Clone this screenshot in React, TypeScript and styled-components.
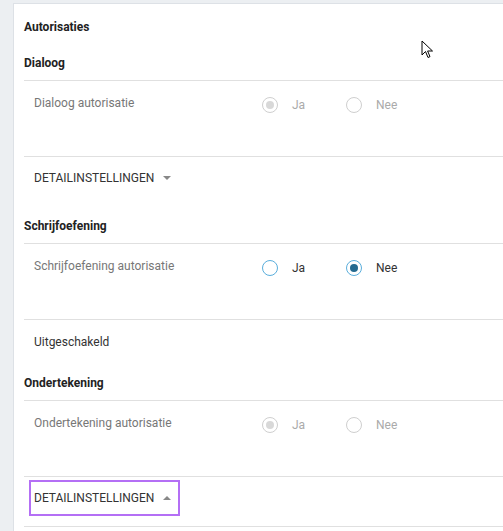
import { createGlobalStyle, styled } from "styled-components";

const GlobalStyle = createGlobalStyle`
  html, body {
    margin: 0;
    padding: 0;
    background: #eceff2;
    overflow: hidden;
  }
  body {
    font-family: Roboto, "Liberation Sans", Arial, sans-serif;
    font-size: 12px;
    color: #222;
  }
`;

const StyledPage = styled.div`
  position: relative;
  padding: 3px 0 0 13px;
  height: 531px;
  box-sizing: border-box;
  overflow: hidden;
`;

const StyledPanel = styled.div`
  width: 520px;
  min-height: 560px;
  background: #fff;
  border: 1px solid #dde1e6;
  padding-left: 10px;
`;

const StyledTitle = styled.div`
  padding: 15px 0 9px;
  line-height: 16px;
  font-weight: 700;
  font-size: 12px;
`;

const StyledHeading = styled.div`
  height: 35px;
  padding-top: 1px;
  line-height: 36px;
  font-weight: 700;
  border-bottom: 1px solid #e0e0e0;
`;

const StyledRow = styled.div`
  display: flex;
  height: 75px;
  border-bottom: 1px solid #e0e0e0;
  padding-left: 10px;
`;

const StyledLabel = styled.div`
  width: 228px;
  padding-top: 14px;
  line-height: 16px;
  color: #777;
`;

const StyledRadios = styled.div`
  display: flex;
  padding-top: 16px;
  height: 16px;
`;

const StyledOption = styled.label<{ $disabled?: boolean }>`
  display: flex;
  align-items: center;
  width: 84px;
  gap: 14px;
  color: ${({ $disabled }) => ($disabled ? "#aaa" : "#333")};
  line-height: 16px;
`;

const StyledCircle = styled.span<{ $disabled?: boolean; $checked?: boolean }>`
  width: 16px;
  height: 16px;
  box-sizing: border-box;
  border-radius: 50%;
  border: 1px solid ${({ $disabled }) => ($disabled ? "#cfcfcf" : "#5aaedc")};
  display: flex;
  align-items: center;
  justify-content: center;

  &::after {
    content: "";
    display: ${({ $checked }) => ($checked ? "block" : "none")};
    width: 8px;
    height: 8px;
    border-radius: 50%;
    background: ${({ $disabled }) => ($disabled ? "#d8d8d8" : "#246a90")};
  }
`;

const StyledDetails = styled.div<{ $divider?: boolean }>`
  height: 50px;
  padding: 3px 0 0 5px;
  box-sizing: border-box;
  border-bottom: 1px solid ${({ $divider }) => ($divider ? "#e0e0e0" : "transparent")};
`;

const StyledDetailsButton = styled.button<{ $focused?: boolean }>`
  display: inline-flex;
  align-items: center;
  gap: 9px;
  height: 36px;
  padding: 0 7px 0 3px;
  background: transparent;
  border: 2px solid ${({ $focused }) => ($focused ? "#b46ff5" : "transparent")};
  font-family: inherit;
  font-size: 12px;
  color: #333;
  text-transform: uppercase;
  cursor: pointer;
`;

const StyledCaret = styled.span<{ $up?: boolean }>`
  width: 0;
  height: 0;
  border-left: 4px solid transparent;
  border-right: 4px solid transparent;
  ${({ $up }) =>
    $up ? "border-bottom: 4px solid #888;" : "border-top: 4px solid #888;"}
`;

const StyledPlain = styled.div`
  height: 44px;
  padding: 14px 0 0 10px;
  box-sizing: border-box;
  line-height: 16px;
  color: #333;
`;

const StyledCursor = styled.svg`
  position: absolute;
  left: 421px;
  top: 40px;
`;

type RowProps = {
  label: string;
  value: "ja" | "nee";
  disabled?: boolean;
};

const AuthRow = ({ label, value, disabled }: RowProps): JSX.Element => (
  <StyledRow>
    <StyledLabel>{label}</StyledLabel>
    <StyledRadios>
      <StyledOption $disabled={disabled}>
        <StyledCircle $disabled={disabled} $checked={value === "ja"} />
        Ja
      </StyledOption>
      <StyledOption $disabled={disabled}>
        <StyledCircle $disabled={disabled} $checked={value === "nee"} />
        Nee
      </StyledOption>
    </StyledRadios>
  </StyledRow>
);

const Details = ({ open }: { open?: boolean }): JSX.Element => (
  <StyledDetails $divider={open}>
    <StyledDetailsButton $focused={open}>
      Detailinstellingen
      <StyledCaret $up={open} />
    </StyledDetailsButton>
  </StyledDetails>
);

const App = (): JSX.Element => (
  <StyledPage>
    <GlobalStyle />
    <StyledPanel>
      <StyledTitle>Autorisaties</StyledTitle>
      <StyledHeading>Dialoog</StyledHeading>
      <AuthRow label='Dialoog autorisatie' value='ja' disabled />
      <Details />
      <StyledHeading>Schrijfoefening</StyledHeading>
      <AuthRow label='Schrijfoefening autorisatie' value='nee' />
      <StyledPlain>Uitgeschakeld</StyledPlain>
      <StyledHeading>Ondertekening</StyledHeading>
      <AuthRow label='Ondertekening autorisatie' value='ja' disabled />
      <Details open />
    </StyledPanel>
    <StyledCursor width='13' height='20' viewBox='0 0 13 20'>
      <path
        d='M1 1 L1 15 L4.5 11.5 L7 17.5 L9 16.6 L6.6 11 L11.5 11 Z'
        fill='#fff'
        stroke='#000'
        strokeWidth='1'
        strokeLinejoin='round'
      />
    </StyledCursor>
  </StyledPage>
);

export default App;
